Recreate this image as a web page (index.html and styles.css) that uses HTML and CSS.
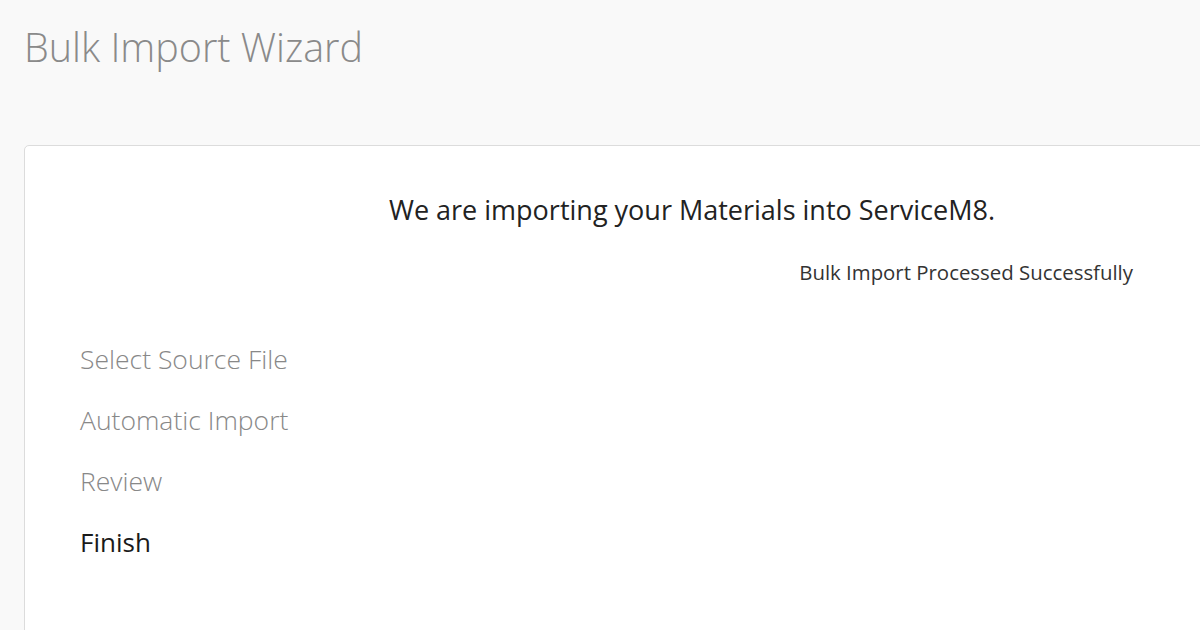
FILE: index.html
```html
<!DOCTYPE html>
<html>
<head>
<meta charset="utf-8">
<link rel="stylesheet" href="styles.css">
</head>
<body>
<div class="page">
  <h1 class="title">Bulk Import Wizard</h1>
  <div class="card">
    <div class="status">
      <h2 class="status-heading">We are importing your Materials into ServiceM8.</h2>
      <p class="status-msg">Bulk Import Processed Successfully</p>
    </div>
    <ul class="steps">
      <li class="step">Select Source File</li>
      <li class="step">Automatic Import</li>
      <li class="step">Review</li>
      <li class="step step-active">Finish</li>
    </ul>
  </div>
</div>
</body>
</html>
```
FILE: styles.css
```css
html, body {
  margin: 0;
  padding: 0;
  width: 1200px;
  height: 630px;
  overflow: hidden;
  background: #f9f9f9;
  font-family: "Open Sans", "Liberation Sans", sans-serif;
}
.page {
  padding: 22px 0 0 24px;
}
.title {
  margin: 0;
  font-weight: 300;
  font-size: 39.5px;
  line-height: 50px;
  color: #8a8a8a;
}
.card {
  margin-top: 73px;
  width: 1240px;
  height: 600px;
  background: #fff;
  border: 1px solid #dcdcdc;
  border-radius: 5px;
  box-sizing: border-box;
}
.status {
  margin-left: 226px;
  width: 882px;
  padding-top: 44px;
}
.status-heading {
  margin: 0;
  text-align: center;
  font-weight: 400;
  font-size: 27px;
  line-height: 40px;
  color: #222;
}
.status-msg {
  margin: 30px 0 0;
  text-align: right;
  font-size: 20.4px;
  line-height: 24px;
  color: #333;
}
.steps {
  list-style: none;
  margin: 45px 0 0;
  padding: 0 0 0 55px;
}
.step {
  font-size: 26.5px;
  font-weight: 300;
  line-height: 61px;
  color: #888;
}
.step-active {
  font-size: 26px;
  font-weight: 400;
  color: #1a1a1a;
}
```
